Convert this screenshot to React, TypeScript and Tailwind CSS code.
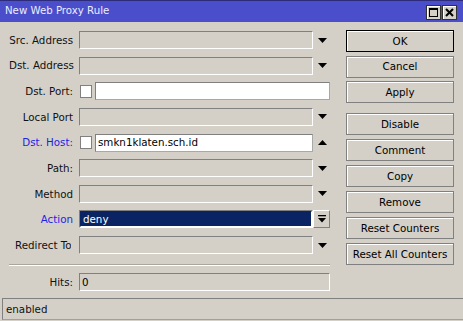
import React from "react";

const DownArrow = () => (
  <svg width="9" height="5" viewBox="0 0 9 5">
    <polygon points="0,0 9,0 4.5,5" fill="#000" />
  </svg>
);
const UpArrow = () => (
  <svg width="9" height="5" viewBox="0 0 9 5">
    <polygon points="0,5 9,5 4.5,0" fill="#000" />
  </svg>
);
const BarArrow = () => (
  <svg width="8" height="8" viewBox="0 0 8 8">
    <rect x="0" y="0" width="8" height="1.3" fill="#000" />
    <polygon points="0,3 8,3 4,7.5" fill="#000" />
  </svg>
);

const Label = ({ text, blue, clip }: { text: string; blue?: boolean; clip?: boolean }) => (
  <div
    className={
      "shrink-0 whitespace-nowrap overflow-hidden " +
      (clip ? "w-[62px] mr-[8px] text-left pl-[6px]" : "w-[65px] mr-[5px] text-right pr-[1px]") +
      (blue ? " text-[#1f1fe6]" : " text-[#111]")
    }
  >
    {text}
  </div>
);

const sunkenGray =
  "h-[18px] bg-[#d4d0c8] border-t border-l border-[#808080] border-b-white border-r-white border-b border-r";
const sunkenWhite =
  "h-[18px] bg-white border border-t-[#808080] border-l-[#808080] border-b-[#a8a8a8] border-r-[#a8a8a8]";

const DropRow = ({ label, blue, clip }: { label: string; blue?: boolean; clip?: boolean }) => (
  <div className="flex items-center h-[18px]">
    <Label text={label} blue={blue} clip={clip} />
    <div className={sunkenGray + " w-[234px]"} />
    <div className="w-[17px] h-[18px] flex items-center justify-center pl-[1px]">
      <DownArrow />
    </div>
  </div>
);

const Checkbox = () => (
  <div className="w-[12px] h-[13px] ml-[1px] mr-[3px] bg-white border border-[#808080]" />
);

const Btn = ({ text, def }: { text: string; def?: boolean }) => (
  <div
    className={
      "w-[108px] h-[22px] flex items-center justify-center border shadow-[inset_1px_1px_0_#ffffff] " +
      (def ? "border-black" : "border-[#808080]")
    }
  >
    {text}
  </div>
);

export default function App() {
  return (
    <div className="w-[463px] h-[321px] bg-[#d4d0c8] flex flex-col overflow-hidden font-['DejaVu_Sans',sans-serif] text-[10.3px] leading-none text-black">
      {/* Title bar */}
      <div className="h-[22px] shrink-0 bg-[#4b4ecb] border-t border-[#2c2c7a] flex items-center pl-[5px] pr-[6px]">
        <div className="flex-1 text-[10.2px] text-[#ececff] pb-[1px]">New Web Proxy Rule</div>
        <div className="flex gap-[1px] self-start mt-[4px]">
          <div className="w-[15px] h-[15px] bg-[#d4d0c8] border border-[#303030] shadow-[inset_1px_1px_0_#ffffff] flex items-center justify-center">
            <div className="w-[9px] h-[9px] border border-black border-t-2" />
          </div>
          <div className="w-[15px] h-[15px] bg-[#d4d0c8] border border-[#303030] shadow-[inset_1px_1px_0_#ffffff] flex items-center justify-center">
            <svg width="9" height="9" viewBox="0 0 9 9">
              <path d="M1 1 L8 8 M8 1 L1 8" stroke="#000" strokeWidth="2" />
            </svg>
          </div>
        </div>
      </div>

      {/* Body */}
      <div className="flex flex-1 min-h-0">
        <div className="w-[346px] shrink-0 pl-[9px] pt-[9px] flex flex-col">
          <div className="flex flex-col gap-[7.625px]">
            <DropRow label="Src. Address" />
            <DropRow label="Dst. Address" />
            <div className="flex items-center h-[18px]">
              <Label text="Dst. Port:" />
              <Checkbox />
              <div className={sunkenWhite + " w-[235px]"} />
            </div>
            <DropRow label="Local Port" />
            <div className="flex items-center h-[18px]">
              <Label text="Dst. Host:" blue />
              <Checkbox />
              <div className={sunkenWhite + " w-[218px] flex items-center pl-[2px]"}>smkn1klaten.sch.id</div>
              <div className="w-[17px] h-[18px] flex items-center justify-center pl-[1px]">
                <UpArrow />
              </div>
            </div>
            <DropRow label="Path:" />
            <DropRow label="Method" />
            <div className="flex items-center h-[18px]">
              <Label text="Action" blue />
              <div className="w-[234px] h-[18px] border-t border-l border-[#808080] border-b border-r border-b-white border-r-white">
                <div className="w-full h-full bg-[#0a2463] border border-white border-t-[#0a2463] border-l-[#0a2463] text-white flex items-center pl-[2px]">
                  deny
                </div>
              </div>
              <div className="w-[17px] h-[18px] border border-t-white border-l-white border-b-[#808080] border-r-[#808080] flex items-center justify-center">
                <BarArrow />
              </div>
            </div>
            <DropRow label="Redirect To" clip />
          </div>
          <div className="mt-[10px] w-[321px] border-t border-[#a9a6a0] border-b border-b-white" />
          <div className="mt-[7px] flex items-center h-[18px]">
            <Label text="Hits:" />
            <div className={sunkenGray + " w-[251px] flex items-center pl-[2px]"}>0</div>
          </div>
        </div>

        <div className="pt-[8px] flex flex-col">
          <div className="flex flex-col gap-[3.5px]">
            <Btn text="OK" def />
            <Btn text="Cancel" />
            <Btn text="Apply" />
          </div>
          <div className="mt-[10px] flex flex-col gap-[4px]">
            <Btn text="Disable" />
            <Btn text="Comment" />
            <Btn text="Copy" />
            <Btn text="Remove" />
            <Btn text="Reset Counters" />
            <Btn text="Reset All Counters" />
          </div>
        </div>
      </div>

      {/* Status bar */}
      <div className="h-[23px] shrink-0 pl-[2px]">
        <div className="h-[22px] border-t border-l border-[#808080] border-b border-b-[#a0a0a0] flex items-center pl-[3px] text-[#111]">
          enabled
        </div>
      </div>
    </div>
  );
}
